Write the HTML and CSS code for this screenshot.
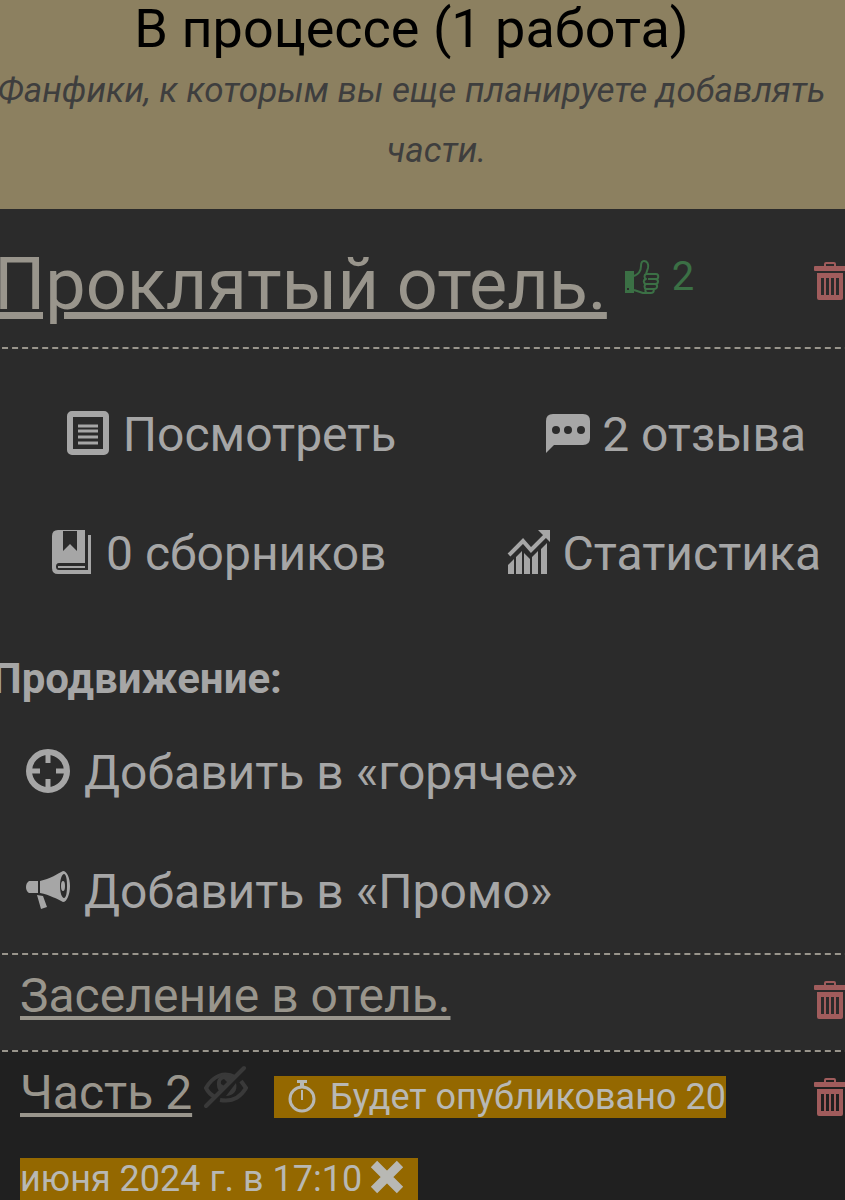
FILE: index.html
```html
<!DOCTYPE html>
<html lang="ru">
<head>
    <meta charset="utf-8">
    <meta name="viewport" content="width=device-width, initial-scale=1.0">
    <title>Мои работы</title>
    <link rel="stylesheet" href="styles.css">
</head>
<body>
    <!-- Общие иконки -->
    <svg class="sprite" aria-hidden="true">
        <symbol id="icon-trash" viewBox="0 0 32 40">
            <path fill="none" stroke="currentColor" stroke-width="2" d="M11 6V3q0-1 1-1h8q1 0 1 1v3" />
            <rect x="0" y="5" width="32" height="5" rx="1" fill="currentColor" />
            <path fill="currentColor" fill-rule="evenodd" d="M3 12h26v25q0 2-2 2H5q-2 0-2-2zM7 17v17h3V17zM12 17v17h3V17zM17 17v17h3V17zM22 17v17h3V17z" />
        </symbol>
    </svg>

    <main class="page">
        <!-- Заголовок раздела -->
        <header class="section-header">
            <h1>В процессе (1 работа)</h1>
            <p>Фанфики, к которым вы еще планируете добавлять части.</p>
        </header>

        <article class="work">
            <!-- Название работы -->
            <div class="work-head">
                <h2><a href="#work">Проклятый отель.</a></h2>
                <span class="likes">
                    <svg width="36" height="36" viewBox="0 0 36 36" aria-hidden="true">
                        <path fill="currentColor" fill-rule="evenodd" d="M1 12h9v22H1zM3 29v2h2v-2z" />
                        <path fill="none" stroke="currentColor" stroke-width="2" stroke-linejoin="round" d="M10 17c5-2 7-5 7-10 0-3 1-5 3-5 3 0 5 3 4 7l-2 6h10c3 0 3 5 0 5h-8M31 20c4 0 4 5 0 5h-9M31 25c3 0 3 5-1 5h-8M28 30c3 0 2 4-1 4h-8l-9-3M22 15c-2 1-2 4 0 5-3 1-3 4 0 5-2 1-2 4 0 5-1 1-1 3 1 4" />
                    </svg>
                    <span>2</span>
                </span>
                <button class="delete-button" type="button" aria-label="Удалить работу">
                    <svg width="32" height="40" aria-hidden="true"><use href="#icon-trash" /></svg>
                </button>
            </div>

            <!-- Меню работы -->
            <nav class="work-menu">
                <div class="menu-row">
                    <a class="menu-link wide" href="#view">
                        <svg width="42" height="44" viewBox="0 0 42 44" aria-hidden="true">
                            <rect x="3" y="3" width="36" height="38" rx="2" fill="none" stroke="currentColor" stroke-width="6" />
                            <path stroke="currentColor" stroke-width="3" d="M11 15h20M11 20h20M11 26h20M11 32h20" />
                        </svg>
                        Посмотреть
                    </a>
                    <a class="menu-link" href="#reviews">
                        <svg width="44" height="44" viewBox="0 0 44 44" aria-hidden="true">
                            <path fill="currentColor" fill-rule="evenodd" d="M7 3h30q7 0 7 7v17q0 7-7 7H8l-8 8V10q0-7 7-7zM10 15a4 4 0 1 0 0 8 4 4 0 0 0 0-8zM22 15a4 4 0 1 0 0 8 4 4 0 0 0 0-8zM35 15a4 4 0 1 0 0 8 4 4 0 0 0 0-8z" />
                        </svg>
                        2 отзыва
                    </a>
                </div>
                <div class="menu-row">
                    <a class="menu-link wide" href="#collections">
                        <svg width="40" height="44" viewBox="0 0 40 44" aria-hidden="true">
                            <path fill="currentColor" fill-rule="evenodd" d="M6 0h27v33H7q-3 0-3 3.500t3 3.500h29V5h3v39H6q-6 0-6-6V6q0-6 6-6zM11 1v20l7-7 7 7V1z" />
                            <path stroke="currentColor" stroke-width="2" d="M6 37h27" />
                        </svg>
                        0 сборников
                    </a>
                    <a class="menu-link" href="#stats">
                        <svg width="44" height="44" viewBox="0 0 44 44" aria-hidden="true">
                            <path fill="none" stroke="currentColor" stroke-width="4" d="M2 25l14-14 8 9L38 6" />
                            <path fill="currentColor" d="M31 0h12v12zM1 44V35l6-6v15zM9 44V27l6-6v23zM17 44V23l6 6v15zM25 44V27l6-6v23zM34 44V19l6-6v31z" />
                        </svg>
                        Статистика
                    </a>
                </div>
            </nav>

            <!-- Продвижение -->
            <section class="promo">
                <h3>Продвижение:</h3>
                <a class="menu-link wide" href="#hot">
                    <svg width="44" height="44" viewBox="0 0 44 44" aria-hidden="true">
                        <circle cx="22" cy="22" r="19" fill="none" stroke="currentColor" stroke-width="6" />
                        <path stroke="currentColor" stroke-width="5" d="M22 4v10M22 30v10M4 22h10M30 22h10" />
                    </svg>
                    Добавить в «горячее»
                </a>
                <a class="menu-link wide" href="#promo">
                    <svg width="44" height="44" viewBox="0 0 44 44" aria-hidden="true">
                        <path fill="currentColor" fill-rule="evenodd" d="M37 3c4 0 7 7 7 15s-3 16-7 16c-6-3-13-7-23-9V13C24 11 31 6 37 3zM38 6c-2 0-4 5-4 12s2 12 4 12 3-5 3-12-1-12-3-12z" />
                        <ellipse cx="37" cy="18" rx="2" ry="5" fill="currentColor" />
                        <path fill="currentColor" d="M12 13v12H3q-3-2-3-6t3-6zM11 27l6 1 4 11-6 2z" />
                    </svg>
                    Добавить в «Промо»
                </a>
            </section>

            <!-- Части -->
            <ul class="parts">
                <li class="part">
                    <div class="part-title"><a href="#part-1">Заселение в отель.</a></div>
                    <button class="delete-button" type="button" aria-label="Удалить часть 1">
                        <svg width="32" height="40" aria-hidden="true"><use href="#icon-trash" /></svg>
                    </button>
                </li>
                <li class="part draft">
                    <div class="part-title">
                        <a href="#part-2">Часть 2</a>
                        <svg class="hidden-icon" width="44" height="44" viewBox="0 0 44 44" aria-hidden="true">
                            <path fill="none" stroke="currentColor" stroke-width="4" d="M31 12C20 6 9 11 2 23c2 4 5 7 9 9M37 16l5 7c-6 10-15 14-26 12" />
                            <path fill="currentColor" d="M29 11c-9-5-17 1-16 9 0 4 2 6 4 7l5-5-5-3q-1-4 3-5l4 4zM32 18c2 8-3 13-10 13z" />
                            <path stroke="currentColor" stroke-width="4" stroke-linecap="round" d="M2 41L40 3" />
                        </svg>
                        <span class="badge"><svg class="timer-icon" width="28" height="34" viewBox="0 0 28 34" aria-hidden="true">
                                <circle cx="14" cy="20" r="12" fill="none" stroke="currentColor" stroke-width="3" />
                                <path fill="currentColor" d="M9 1h10v3h-3v4h-4V4H9zM13 11h2v10h-2z" />
                            </svg>Будет опубликовано 20 июня 2024 г. в 17:10<button class="cancel-button" type="button" aria-label="Отменить публикацию">
                                <svg width="34" height="34" viewBox="0 0 34 34" aria-hidden="true">
                                    <path stroke="currentColor" stroke-width="9" d="M4 4l26 26M30 4L4 30" />
                                </svg>
                            </button></span>
                    </div>
                    <button class="delete-button" type="button" aria-label="Удалить часть 2">
                        <svg width="32" height="40" aria-hidden="true"><use href="#icon-trash" /></svg>
                    </button>
                </li>
            </ul>
        </article>
    </main>
</body>
</html>
```
FILE: styles.css
```css
* {
    box-sizing: border-box;
}

body {
    margin: 0;
    height: 100vh;
    overflow: hidden;
    font-family: Roboto, "Noto Sans", sans-serif;
    font-size: 48px;
    color: #a6a6a6;
    background-color: #2b2b2b;
}

a {
    color: inherit;
}

svg {
    flex: none;
}

.sprite {
    display: none;
}

/* Страница шире окна с обеих сторон */
.page {
    margin: 0 -36px 0 -8px;
}

/* Заголовок раздела */
.section-header {
    padding-bottom: 28px;
    text-align: center;
    background-color: #8c8060;
}

    .section-header h1 {
        margin: 0 0 3px;
        padding-right: 50px;
        font-size: 54px;
        font-weight: 400;
        line-height: 58px;
        color: #000;
    }

    .section-header p {
        margin: 0;
        padding: 0 10px;
        font-size: 35px;
        font-style: italic;
        line-height: 60px;
        text-indent: -50px;
        color: #3e3e3e;
    }

/* Название работы */
.work-head {
    display: flex;
    align-items: flex-start;
    padding: 34px 35px 20px 2px;
    border-bottom: 2px dashed #99958c;
}

    .work-head h2 {
        margin: 0;
        font-size: 72px;
        font-weight: 400;
        line-height: 84px;
        color: #99958c;
    }

    .work-head a {
        text-decoration-thickness: 7px;
        text-underline-offset: 3px;
    }

.likes {
    display: flex;
    align-items: center;
    gap: 12px;
    margin-left: 17px;
    padding-top: 10px;
    font-size: 40px;
    line-height: 48px;
    color: #3b7045;
}

.delete-button {
    display: flex;
    margin-left: auto;
    padding: 18px 0 0;
    border: none;
    background: none;
    color: #a05c5c;
    cursor: pointer;
}

/* Меню работы */
.work-menu {
    padding-top: 26px;
}

.menu-row {
    display: flex;
    justify-content: space-around;
}

.menu-link {
    display: flex;
    align-items: center;
    gap: 12px;
    line-height: 119px;
    text-decoration: none;
}

    .menu-link.wide {
        gap: 14px;
    }

    .menu-link svg {
        margin-bottom: 4px;
    }

/* Продвижение */
.promo {
    padding-bottom: 2px;
}

    .promo h3 {
        margin: 0;
        padding: 36px 0 4px;
        font-size: 42px;
        line-height: 60px;
    }

    .promo .menu-link {
        padding-left: 34px;
    }

/* Части */
.parts {
    margin: 0;
    padding: 0;
    list-style: none;
}

.part {
    display: flex;
    align-items: flex-start;
    padding: 0 35px 13px 28px;
    border-top: 2px dashed #99958c;
    line-height: 82px;
}

    .part a {
        color: #99958c;
        text-decoration-thickness: 4px;
        text-underline-offset: 4px;
    }

    .part .delete-button {
        padding-top: 25px;
    }

.draft {
    background-color: #202020;
}

.part-title {
    flex: 1;
}

.hidden-icon {
    margin-right: 14px;
    color: #393939;
}

.badge {
    padding: 0 14px;
    font-size: 36px;
    line-height: 42px;
    color: #b8b8b4;
    background-color: #946800;
}

.timer-icon {
    margin-right: 14px;
    vertical-align: -4px;
}

.cancel-button {
    margin-left: 8px;
    padding: 0;
    border: none;
    background: none;
    color: inherit;
    line-height: 0;
    vertical-align: -3px;
    cursor: pointer;
}
```
